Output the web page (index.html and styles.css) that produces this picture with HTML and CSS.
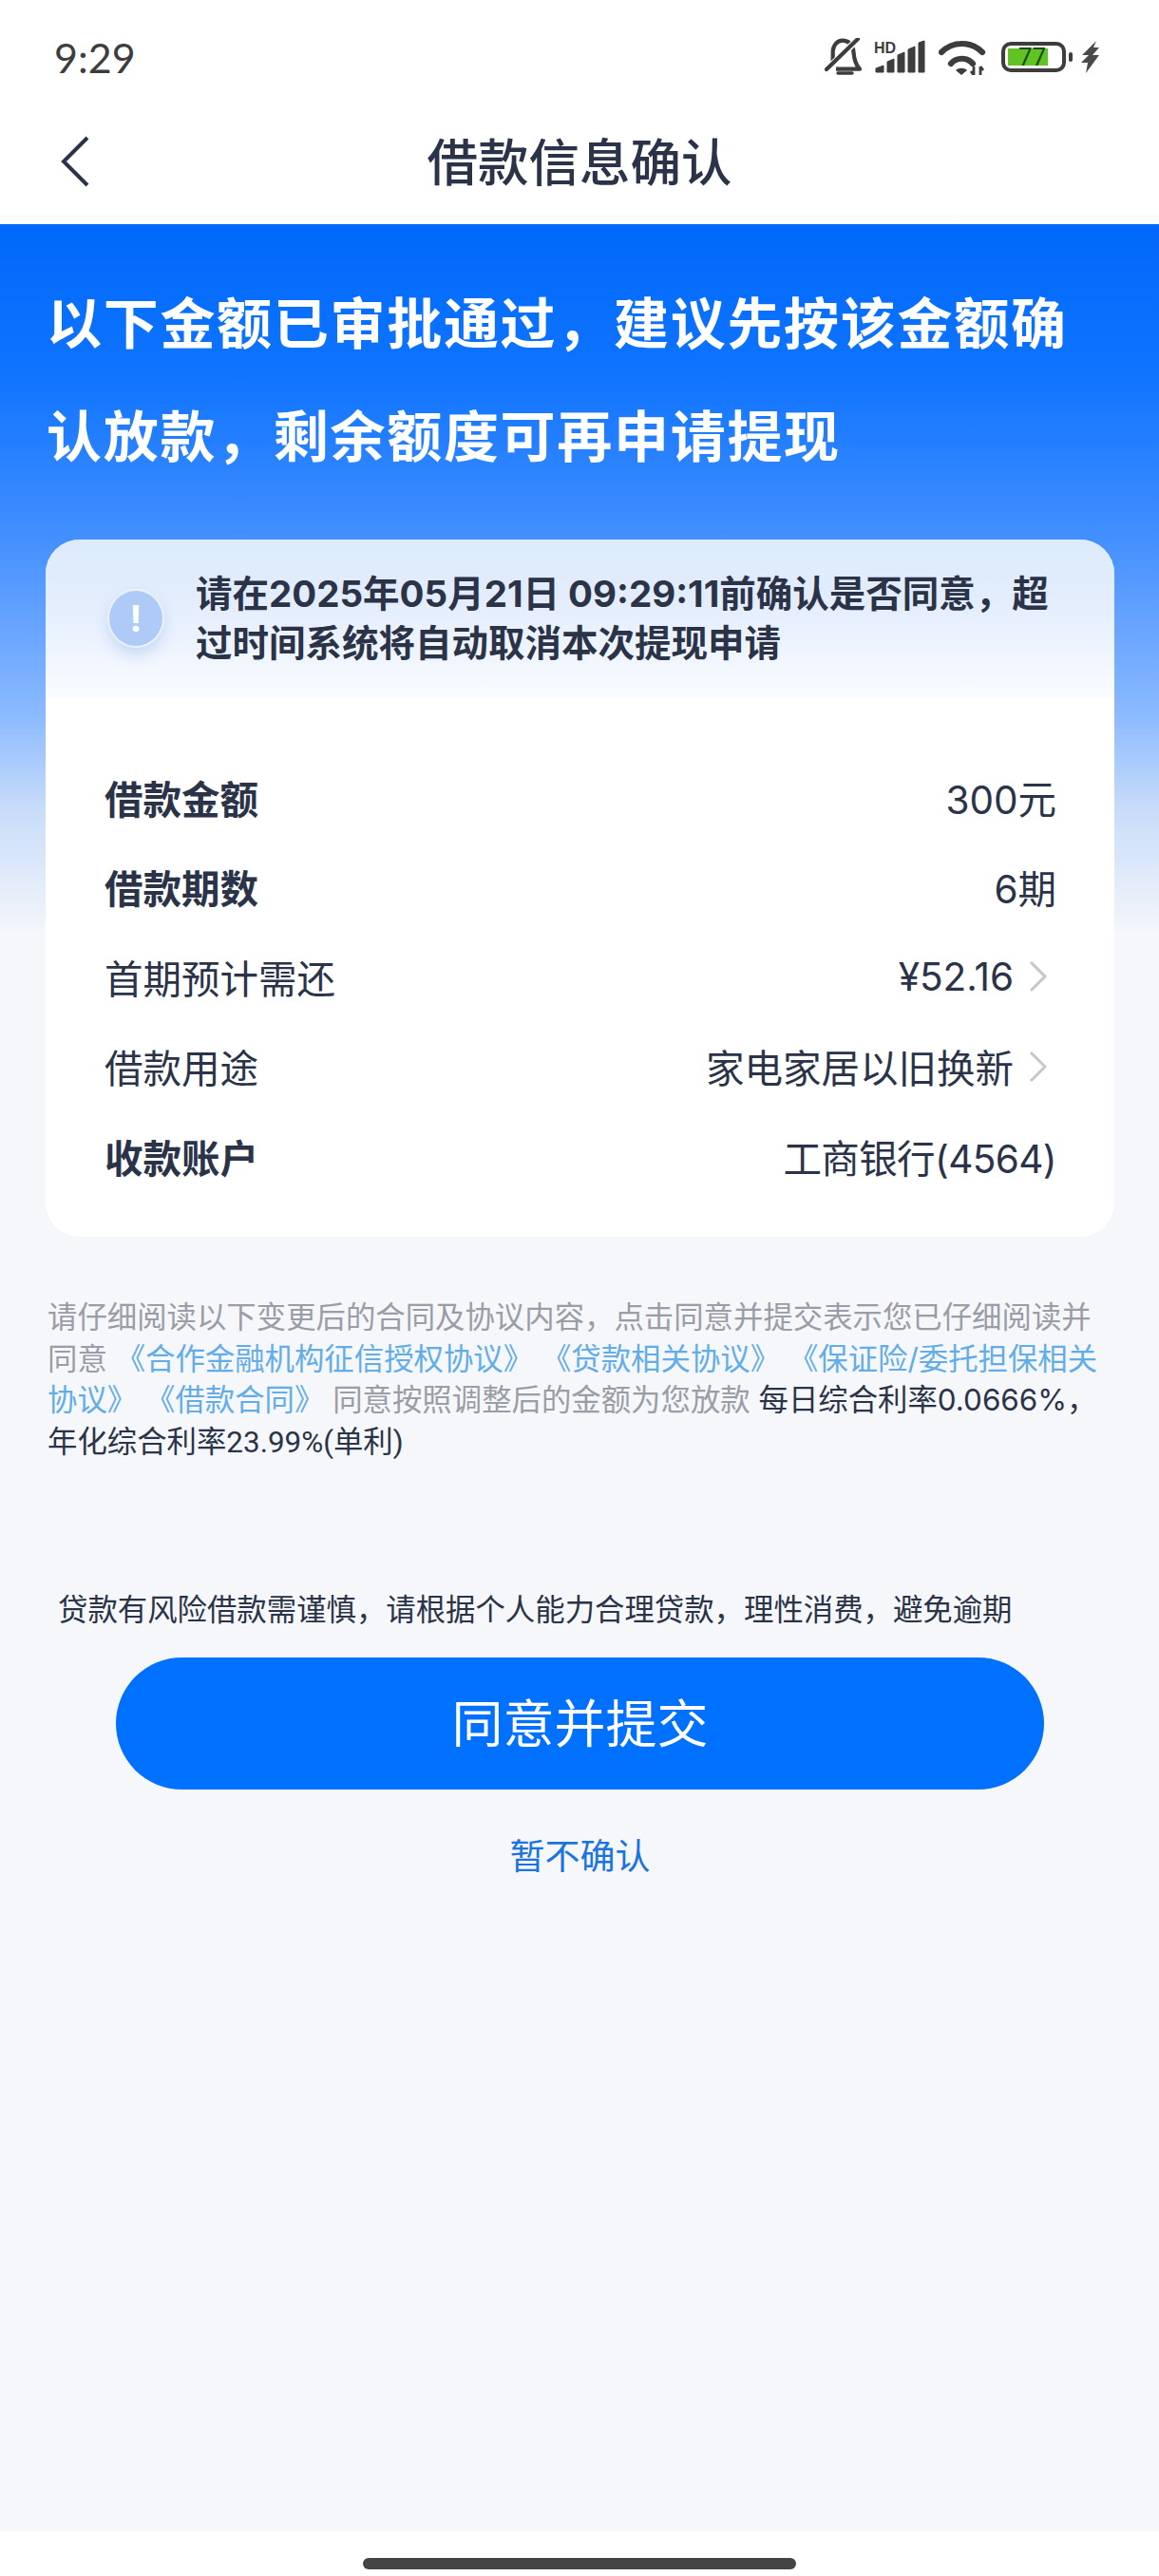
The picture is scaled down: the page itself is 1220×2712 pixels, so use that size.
FILE: index.html
```html
<!DOCTYPE html>
<html>

<head>
    <title>借款信息确认</title>
    <link rel="stylesheet" href="styles.css">
</head>

<body>
    <div class="status-bar">
        <span class="clock">9:29</span>
        <div class="status-icons">
            <svg class="icon-bell" viewBox="0 0 40 40" width="40" height="40">
                <path d="M12 32.7 H37 C32.5 28 31 22 30.5 15 C30 7 25 2.7 19 2.7 C13 2.7 9 8 8.7 14 V24" fill="none" stroke="#3d3d3d" stroke-width="4.2" stroke-linejoin="round"/>
                <path d="M14 37 H29" stroke="#3d3d3d" stroke-width="3.4" stroke-linecap="round"/>
                <path d="M1 35 L36 0" stroke="#ffffff" stroke-width="7"/>
                <path d="M2 33 L35 1" stroke="#3d3d3d" stroke-width="4.2" stroke-linecap="round"/>
            </svg>
            <svg class="icon-signal" viewBox="0 0 54 36" width="54" height="36">
                <text x="0" y="14" class="hd-text">HD</text>
                <path d="M2 34 V30 L10 27 V34 Z" fill="#3d3d3d" stroke="#3d3d3d" stroke-linejoin="round"/>
                <path d="M14 34 V23 L21 20 V34 Z" fill="#3d3d3d" stroke="#3d3d3d" stroke-linejoin="round"/>
                <path d="M25 34 V16 L32 13 V34 Z" fill="#3d3d3d" stroke="#3d3d3d" stroke-linejoin="round"/>
                <path d="M36 34 V10 L43 7 V34 Z" fill="#3d3d3d" stroke="#3d3d3d" stroke-linejoin="round"/>
                <path d="M47 34 V3 L53 1 V34 Z" fill="#3d3d3d" stroke="#3d3d3d" stroke-linejoin="round"/>
            </svg>
            <svg class="icon-wifi" viewBox="0 0 50 37" width="50" height="37">
                <path d="M3 13 C15 1 34 1 46 13" fill="none" stroke="#3d3d3d" stroke-width="6.2" stroke-linecap="round"/>
                <path d="M13 25 C19 18 30 18 36 25" fill="none" stroke="#3d3d3d" stroke-width="6.2" stroke-linecap="round"/>
                <path d="M18 32 L24 37 L30 32 C27 29 21 29 18 32 Z" fill="#3d3d3d"/>
                <path d="M37 28 V37 M34 33 L37 37 M44 37 V28 M44 28 L47 32" stroke="#3d3d3d" stroke-width="2.8" fill="none"/>
            </svg>
            <div class="battery">
                <div class="battery-body">
                    <div class="battery-level"></div>
                    <span class="battery-num">77</span>
                </div>
                <div class="battery-nub"></div>
            </div>
            <svg class="icon-bolt" viewBox="0 0 19 34" width="19" height="34">
                <path d="M16 0 L1 15 L8 15 L0 23 L7 23 L5 34 L19 15 L12 15 L19 7 L13 7 Z" fill="#4a4a4a"/>
            </svg>
        </div>
    </div>

    <div class="nav-bar">
        <svg class="back-icon" viewBox="0 0 30 54" width="30" height="54">
            <path d="M28 2 L3 27 L28 52" fill="none" stroke="#2a3348" stroke-width="4"/>
        </svg>
        <div class="nav-title">借款信息确认</div>
    </div>
    <div class="nav-line"></div>

    <div class="main">
        <h1 class="headline">以下金额已审批通过，建议先按该金额确认放款，剩余额度可再申请提现</h1>

        <div class="card">
            <div class="notice">
                <div class="notice-icon">!</div>
                <div class="notice-text">请在2025年05月21日 09:29:11前确认是否同意，超过时间系统将自动取消本次提现申请</div>
            </div>
            <div class="rows">
                <div class="row">
                    <span class="row-label bold">借款金额</span>
                    <span class="row-value">300元</span>
                </div>
                <div class="row">
                    <span class="row-label bold">借款期数</span>
                    <span class="row-value">6期</span>
                </div>
                <div class="row">
                    <span class="row-label">首期预计需还</span>
                    <span class="row-value">¥52.16
                        <svg class="chevron" viewBox="0 0 20 34" width="20" height="34"><path d="M2 2 L17 17 L2 32" fill="none" stroke="#c6c7c9" stroke-width="3"/></svg>
                    </span>
                </div>
                <div class="row">
                    <span class="row-label">借款用途</span>
                    <span class="row-value">家电家居以旧换新
                        <svg class="chevron" viewBox="0 0 20 34" width="20" height="34"><path d="M2 2 L17 17 L2 32" fill="none" stroke="#c6c7c9" stroke-width="3"/></svg>
                    </span>
                </div>
                <div class="row">
                    <span class="row-label bold">收款账户</span>
                    <span class="row-value tight">工商银行(4564)</span>
                </div>
            </div>
        </div>

        <p class="legal">请仔细阅读以下变更后的合同及协议内容，点击同意并提交表示您已仔细阅读并同意 <span class="link">《合作金融机构征信授权协议》 《贷款相关协议》 《保证险/委托担保相关协议》 《借款合同》</span> 同意按照调整后的金额为您放款 <span class="rate">每日综合利率0.0666%，</span><br><span class="rate rate-narrow">年化综合利率23.99%(单利)</span></p>

        <p class="risk">贷款有风险借款需谨慎，请根据个人能力合理贷款，理性消费，避免逾期</p>
        <button class="submit-btn">同意并提交</button>
        <div class="cancel-link">暂不确认</div>
    </div>

    <div class="home-bar"><div class="home-pill"></div></div>
</body>

</html>
```

FILE: styles.css
```css
* {
    box-sizing: border-box;
}

body {
    margin: 0;
    height: 2712px;
    display: flex;
    flex-direction: column;
    background: #fff;
    color: #2a3348;
    font-family: "Inter", "Noto Sans CJK SC", sans-serif;
}

.status-bar {
    height: 100px;
    padding: 20px 63px 0 57px;
    display: flex;
    justify-content: space-between;
    align-items: center;
}

.clock {
    font-size: 43px;
    color: #3d3d3d;
    font-family: "Lato", sans-serif;
}

.status-icons {
    display: flex;
    align-items: center;
}

.icon-bell {
    margin-right: 12px;
}

.icon-wifi {
    margin-left: 14px;
    margin-right: 16px;
}

.icon-bolt {
    margin-left: 9px;
}

.hd-text {
    font-family: "Liberation Sans", sans-serif;
    font-size: 16px;
    font-weight: bold;
    fill: #3d3d3d;
}

.battery {
    display: flex;
    align-items: center;
}

.battery-body {
    position: relative;
    width: 68px;
    height: 32px;
    border: 4px solid #3d3d3d;
    border-radius: 10px;
    padding: 3px;
}

.battery-level {
    width: 42px;
    height: 18px;
    background: #5fc421;
}

.battery-num {
    position: absolute;
    left: 14px;
    top: 0;
    font-size: 26px;
    line-height: 24px;
    color: #1d4a10;
    font-family: "Roboto", sans-serif;
}

.battery-nub {
    width: 4px;
    height: 10px;
    margin-left: 3px;
    background: #3d3d3d;
    border-radius: 2px;
}

.nav-bar {
    position: relative;
    height: 126px;
    display: flex;
    align-items: center;
    justify-content: center;
    padding-top: 8px;
}

.back-icon {
    position: absolute;
    left: 64px;
    top: 43px;
}

.nav-title {
    font-size: 53.5px;
    font-weight: 500;
    font-family: "Noto Sans CJK SC", sans-serif;
}

.nav-line {
    height: 10px;
    background: #fafdfd;
}

.main {
    flex: 1;
    padding: 0 47px 0 48px;
    background: linear-gradient(180deg, #0068fa 0, #0f74ff 160px, #438fff 330px, #8ab9ff 514px, #c8dcf9 616px, #f5f7fa 749px);
    background-color: #f5f7fa;
}

.headline {
    margin: 0;
    padding: 42px 20px 0 1px;
    height: 332px;
    font-size: 58px;
    line-height: 119px;
    letter-spacing: 1.7px;
    font-weight: 700;
    color: #fff;
    font-family: "Noto Sans CJK SC", sans-serif;
}

.card {
    background: #fff;
    border-radius: 36px;
    overflow: hidden;
    height: 734px;
}

.notice {
    height: 167px;
    padding: 31px 50px 0 65px;
    display: flex;
    gap: 33px;
    background: linear-gradient(180deg, #dcebfc 0, #e3edfc 40%, #fafcff 100%);
}

.notice-icon {
    flex: none;
    width: 60px;
    height: 62px;
    margin-top: 21px;
    border-radius: 50%;
    background: #aecbf8;
    border: 2px solid #e9f1fd;
    box-shadow: 0 8px 14px rgba(120, 160, 230, 0.3);
    color: #fff;
    font-size: 38px;
    font-weight: 700;
    text-align: center;
    line-height: 58px;
}

.notice-text {
    font-size: 38.5px;
    line-height: 52px;
    font-weight: 700;
}

.rows {
    padding: 57px 61px 0 62px;
}

.row {
    height: 94.5px;
    display: flex;
    justify-content: space-between;
    align-items: center;
    font-size: 40.5px;
}

.row-label.bold {
    font-weight: 700;
}

.row-value {
    display: flex;
    align-items: center;
    gap: 16px;
}

.row-value.tight {
    letter-spacing: -0.6px;
}

.chevron {
    margin-right: 9px;
}

.legal {
    margin: 0;
    padding: 64px 0 0 2px;
    font-size: 31.4px;
    line-height: 43.5px;
    color: #9a9ca8;
}

.link {
    color: #62ade8;
}

.rate {
    color: #2a3348;
}

.rate-narrow {
    font-family: "Roboto", "Noto Sans CJK SC", sans-serif;
}

.risk {
    margin: 0;
    padding: 133px 0 0 13px;
    font-size: 31.4px;
    line-height: 44px;
}

.submit-btn {
    display: block;
    width: 977px;
    height: 139px;
    margin: 28px 0 0 74px;
    padding: 0 0 6px;
    border: none;
    border-radius: 70px;
    background: #0070ff;
    color: #fff;
    font-size: 54px;
    font-family: "Noto Sans CJK SC", sans-serif;
}

.cancel-link {
    margin-top: 48px;
    text-align: center;
    font-size: 37px;
    line-height: 46px;
    color: #1a73e0;
}

.home-bar {
    height: 47px;
    display: flex;
    justify-content: center;
    padding-top: 28px;
    background: #fff;
}

.home-pill {
    width: 456px;
    height: 12px;
    border-radius: 6px;
    background: #444;
}
```
